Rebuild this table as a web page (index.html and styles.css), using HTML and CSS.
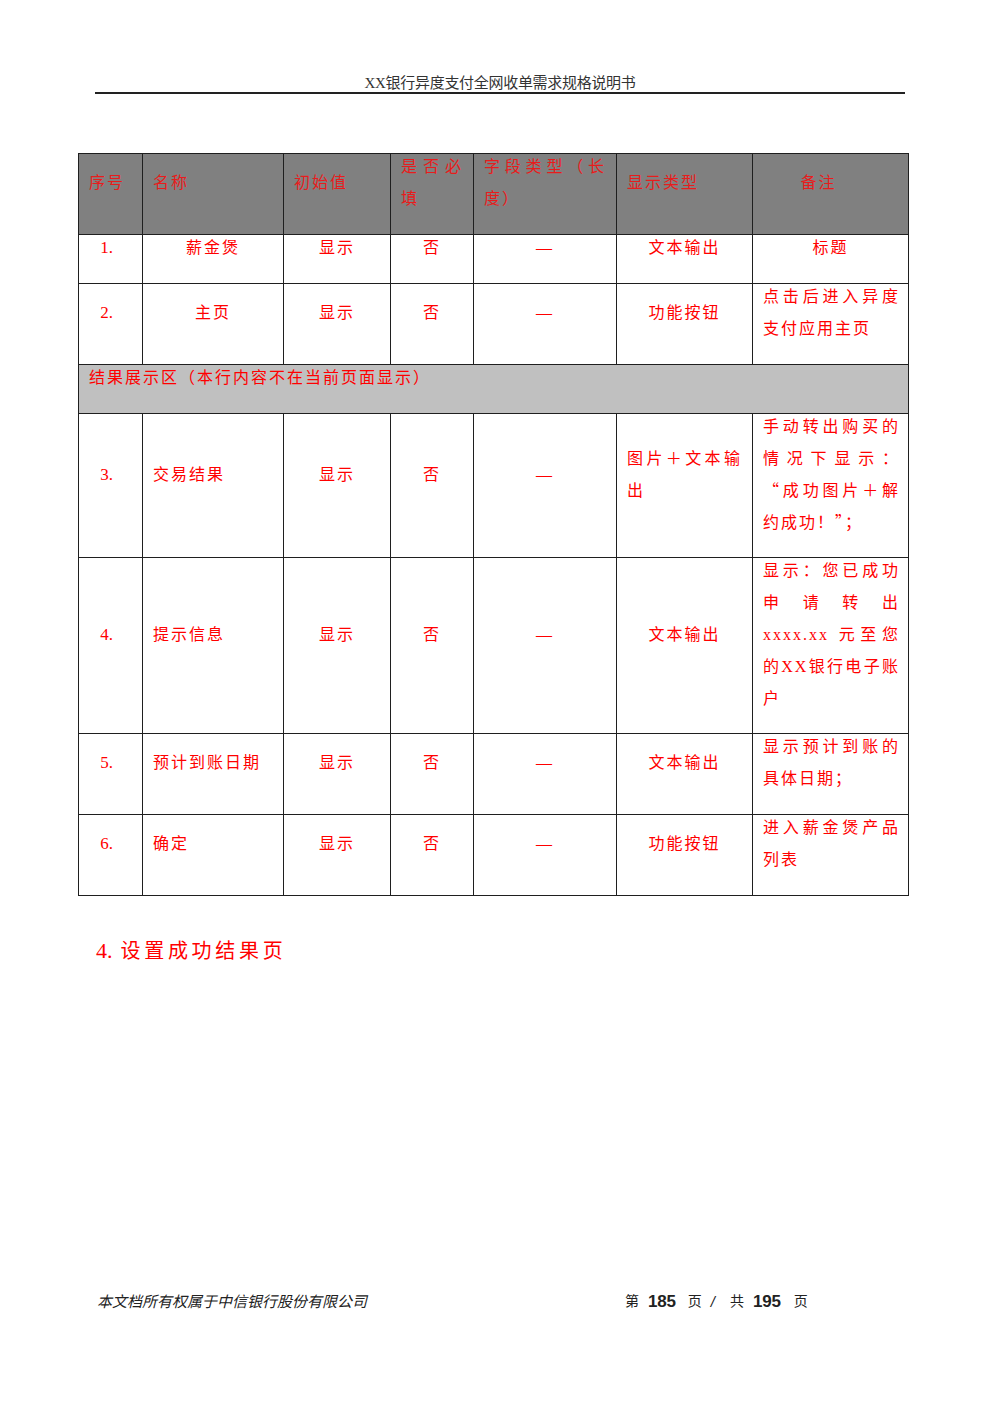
FILE: index.html
```html
<!DOCTYPE html>
<html lang="zh-CN">
<head>
<meta charset="utf-8">
<title>XX银行异度支付全网收单需求规格说明书</title>
<link rel="stylesheet" href="styles.css">
</head>
<body>
<div class="page">
  <header class="doc-header">
    <div class="doc-title">XX银行异度支付全网收单需求规格说明书</div>
  </header>

  <table class="spec">
    <colgroup>
      <col class="w1"><col class="w2"><col class="w3"><col class="w4"><col class="w5"><col class="w6"><col class="w7">
    </colgroup>
    <thead>
      <tr>
        <th><div class="c">序号</div></th>
        <th><div class="c">名称</div></th>
        <th><div class="c">初始值</div></th>
        <th><div class="c j">是否必填</div></th>
        <th><div class="c j">字段类型（长度）</div></th>
        <th><div class="c">显示类型</div></th>
        <th class="center remark-head"><div class="c">备注</div></th>
      </tr>
    </thead>
    <tbody>
      <tr>
        <td class="center num"><div class="c">1.</div></td>
        <td class="center"><div class="c">薪金煲</div></td>
        <td class="center"><div class="c">显示</div></td>
        <td class="center"><div class="c">否</div></td>
        <td class="center"><div class="c">—</div></td>
        <td class="center"><div class="c">文本输出</div></td>
        <td class="center"><div class="c">标题</div></td>
      </tr>
      <tr>
        <td class="center num"><div class="c">2.</div></td>
        <td class="center"><div class="c">主页</div></td>
        <td class="center"><div class="c">显示</div></td>
        <td class="center"><div class="c">否</div></td>
        <td class="center"><div class="c">—</div></td>
        <td class="center"><div class="c">功能按钮</div></td>
        <td class="remark"><div class="c j">点击后进入异度支付应用主页</div></td>
      </tr>
      <tr class="section">
        <td colspan="7"><div class="c">结果展示区（本行内容不在当前页面显示）</div></td>
      </tr>
      <tr>
        <td class="center num"><div class="c">3.</div></td>
        <td><div class="c">交易结果</div></td>
        <td class="center"><div class="c">显示</div></td>
        <td class="center"><div class="c">否</div></td>
        <td class="center"><div class="c">—</div></td>
        <td><div class="c j">图片<span class="cjk">+</span>文本输出</div></td>
        <td class="remark tight">
          <div class="c split">
            <div class="j jl">手动转出购买的情况下显示：</div>
            <div class="j"><span class="cjk">“</span>成功图片<span class="cjk">+</span>解约成功！<span class="cjk">”</span>；</div>
          </div>
        </td>
      </tr>
      <tr>
        <td class="center num"><div class="c">4.</div></td>
        <td><div class="c">提示信息</div></td>
        <td class="center"><div class="c">显示</div></td>
        <td class="center"><div class="c">否</div></td>
        <td class="center"><div class="c">—</div></td>
        <td class="center"><div class="c">文本输出</div></td>
        <td class="remark tight"><div class="c j">显示：您已成功申请转出 xxxx.xx 元至您的XX银行电子账户</div></td>
      </tr>
      <tr>
        <td class="center num"><div class="c">5.</div></td>
        <td><div class="c">预计到账日期</div></td>
        <td class="center"><div class="c">显示</div></td>
        <td class="center"><div class="c">否</div></td>
        <td class="center"><div class="c">—</div></td>
        <td class="center"><div class="c">文本输出</div></td>
        <td class="remark"><div class="c j">显示预计到账的具体日期；</div></td>
      </tr>
      <tr>
        <td class="center num"><div class="c">6.</div></td>
        <td><div class="c">确定</div></td>
        <td class="center"><div class="c">显示</div></td>
        <td class="center"><div class="c">否</div></td>
        <td class="center"><div class="c">—</div></td>
        <td class="center"><div class="c">功能按钮</div></td>
        <td class="remark"><div class="c j">进入薪金煲产品列表</div></td>
      </tr>
    </tbody>
  </table>

  <h2 class="section-title"><span class="n">4.</span>设置成功结果页</h2>

  <footer class="doc-footer">
    <div class="copyright">本文档所有权属于中信银行股份有限公司</div>
    <div class="pager">
      <span>第</span>
      <b class="s1">185</b>
      <span class="s2">页</span>
      <i class="s1">/</i>
      <span class="s3">共</span>
      <b class="s1">195</b>
      <span class="s4">页</span>
    </div>
  </footer>
</div>
</body>
</html>
```

FILE: styles.css
```css
html, body {
  margin: 0;
  padding: 0;
  background: #ffffff;
}

.page {
  width: 1000px;
  min-height: 1415px;
  display: flex;
  flex-direction: column;
  font-family: "Liberation Serif", "Noto Sans CJK SC", serif;
}

.doc-header {
  margin: 0 95px;
  padding-top: 74px;
  padding-bottom: 0;
  border-bottom: 2px solid #222222;
}

.doc-title {
  text-align: center;
  font-family: "Liberation Sans Narrow", "Liberation Serif", "Noto Sans CJK SC", serif;
  font-size: 15px;
  line-height: 18px;
  color: #333333;
  letter-spacing: -0.3px;
}

.spec {
  margin: 59px 0 0 78px;
  width: 830px;
  table-layout: fixed;
  border-collapse: collapse;
  color: #ff0000;
  font-size: 16px;
  letter-spacing: 2px;
}

.w1 { width: 64px; }
.w2 { width: 141px; }
.w3 { width: 107px; }
.w4 { width: 83px; }
.w5 { width: 143px; }
.w6 { width: 136px; }
.w7 { width: 156px; }

.spec th,
.spec td {
  border: 1px solid #1f1f1f;
  padding: 0 10px 16px;
  line-height: 32px;
  vertical-align: middle;
  text-align: left;
  font-weight: normal;
  word-break: normal;
}

.spec td.remark {
  padding-right: 8px;
}

.spec td.tight {
  padding-bottom: 15px;
}

.spec thead th {
  background: #808080;
  color: #e81c1c;
}

.spec .c {
  margin: -3px 0 3px;
}

.spec .j {
  text-align: justify;
}

.spec .jl {
  text-align-last: justify;
}

.spec .cjk {
  font-family: "Noto Sans CJK SC", sans-serif;
  font-feature-settings: "fwid" 1;
  line-height: 0;
}

.spec .center {
  text-align: center;
}

.spec .remark-head {
  padding-right: 34px;
}

.spec .num {
  letter-spacing: 0;
  font-size: 17px;
  padding-right: 18px;
}

.spec .section td {
  background: #c0c0c0;
}

.section-title {
  margin: 40px 0 0 96px;
  font-size: 20px;
  line-height: 30px;
  font-weight: normal;
  color: #ff0000;
  letter-spacing: 3.7px;
}

.section-title .n {
  font-size: 22px;
  letter-spacing: 0;
  margin-right: 8px;
}

.doc-footer {
  margin-top: auto;
  padding: 0 0 103px 97px;
  display: grid;
  grid-template-columns: 528px auto;
  align-items: center;
  line-height: 20px;
  color: #222222;
}

.copyright {
  font-family: "Liberation Sans", "Noto Sans CJK SC", sans-serif;
  font-style: italic;
  font-size: 15px;
  letter-spacing: 0;
}

.pager {
  display: flex;
  align-items: center;
  font-family: "Liberation Serif", "Noto Sans CJK SC", serif;
  font-size: 14px;
}

.pager b {
  font-family: "Liberation Sans", "Noto Sans CJK SC", sans-serif;
  font-size: 17px;
  font-weight: bold;
  letter-spacing: -0.2px;
}

.pager i {
  font-family: "Liberation Sans", sans-serif;
  font-style: italic;
  font-size: 15px;
}

.pager .s1 { margin-left: 9px; }
.pager .s2 { margin-left: 12px; }
.pager .s3 { margin-left: 15px; }
.pager .s4 { margin-left: 13px; }
```
